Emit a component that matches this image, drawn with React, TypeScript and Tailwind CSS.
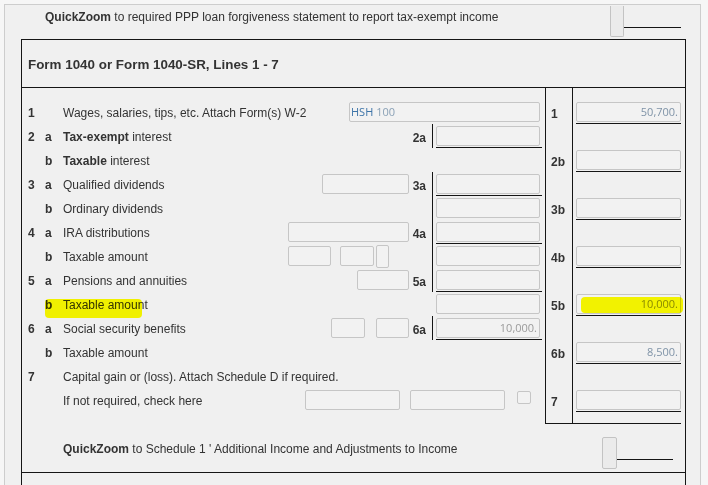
import React from "react";

const LINE = "border-[#151515]";

function Box({ className = "", children }: { className?: string; children?: React.ReactNode }) {
  return (
    <div className={"mt-[2px] h-[20px] border border-[#c6c6c6] rounded-[2px] bg-[#f2f2f2] shrink-0 " + className}>
      {children}
    </div>
  );
}

function Val({ children, color = "text-[#7f93a7]" }: { children: React.ReactNode; color?: string }) {
  return (
    <div className={"h-full flex items-center justify-end pr-[2px] text-[11px] font-['Open_Sans',sans-serif] " + color}>
      {children}
    </div>
  );
}

function Mid({ line, under, children }: { line?: boolean; under?: boolean; children?: React.ReactNode }) {
  return (
    <div className={"w-[113px] h-6 shrink-0 flex flex-col " + (line ? "border-l pl-[3px] " + LINE : "pl-[4px]")}>
      <Box className="w-[104px]">{children}</Box>
      {under ? <div className="mt-[1px] w-[106px] h-px bg-[#151515]" /> : null}
    </div>
  );
}

function LeftRow({
  num,
  letter,
  children,
  right,
}: {
  num?: string;
  letter?: string;
  children?: React.ReactNode;
  right?: React.ReactNode;
}) {
  return (
    <div className="flex h-6">
      <div className="w-[6px] shrink-0" />
      <span className="w-[17px] shrink-0 font-bold leading-[26px]">{num}</span>
      <span className="w-[18px] shrink-0 font-bold leading-[26px]">{letter}</span>
      <div className="flex-1 min-w-0 whitespace-nowrap leading-[26px]">{children}</div>
      <div className="w-[260px] shrink-0 flex">{right}</div>
    </div>
  );
}

function ARight({
  fields,
  label,
  mid,
}: {
  fields?: React.ReactNode;
  label?: string;
  mid?: React.ReactNode;
}) {
  return (
    <>
      <div className="flex w-[124px] shrink-0">{fields}</div>
      <div className="w-[17px] shrink-0 text-right font-bold leading-[28px]">{label}</div>
      <div className="w-[6px] shrink-0" />
      {mid}
    </>
  );
}

function RLabel({ children }: { children?: React.ReactNode }) {
  return <div className="h-6 pl-[5px] font-bold leading-[28px]">{children}</div>;
}

function RField({ children }: { children?: React.ReactNode }) {
  return (
    <div className="h-6 flex flex-col">
      <Box className="w-[105px]">{children}</Box>
      <div className="mt-[1px] w-[105px] h-px bg-[#151515]" />
    </div>
  );
}

function Empty() {
  return <div className="h-6" />;
}

export default function App() {
  return (
    <div className="relative w-[708px] h-[485px] overflow-hidden bg-[#f6f6f6] font-['Liberation_Sans',Arial,sans-serif] text-[12px] text-[#333333]">
      <div className="ml-[4px] mt-[4px] w-[697px] h-[481px] border-l border-t border-r border-[#cdcdcd] bg-[#f0f0f0] flex flex-col">
        {/* top QuickZoom row */}
        <div className="h-[34px] flex shrink-0">
          <div className="w-[605px] pl-[40px] pt-[5px] leading-[14px] whitespace-nowrap">
            <span className="font-bold">QuickZoom</span> to required PPP loan forgiveness statement to report tax-exempt income
          </div>
          <div className="mt-[1px] w-[14px] h-[31px] border border-t-0 border-[#c3c3c3] bg-[#ebebeb] rounded-b-[2px]" />
          <div className={"w-[57px] h-[23px] border-b " + LINE} />
        </div>

        {/* main box */}
        <div className={"ml-[16px] w-[665px] flex-1 border-x border-t flex flex-col " + LINE}>
          <div className={"h-[48px] shrink-0 border-b flex items-center pl-[6px] pt-[4px] text-[13.4px] font-bold " + LINE}>
            Form 1040 or Form 1040-SR, Lines 1 - 7
          </div>

          <div className="flex shrink-0">
            {/* left column */}
            <div className="w-[523px] shrink-0 pt-[12px]">
              <LeftRow
                num="1"
                right={
                  <div className="ml-[64px]">
                    <Box className="w-[191px]">
                      <div className="h-full flex items-center pl-[1px] text-[11px] font-['Open_Sans',sans-serif]">
                        <span className="text-[#3d74a8]">HSH</span>
                        <span className="ml-[3px] text-[#8aa1b6]">100</span>
                      </div>
                    </Box>
                  </div>
                }
              >
                Wages, salaries, tips, etc. Attach Form(s) W-2
              </LeftRow>
              <LeftRow num="2" letter="a" right={<ARight label="2a" mid={<Mid line under />} />}>
                <span className="font-bold">Tax-exempt</span> interest
              </LeftRow>
              <LeftRow letter="b">
                <span className="font-bold">Taxable</span> interest
              </LeftRow>
              <LeftRow
                num="3"
                letter="a"
                right={
                  <ARight
                    fields={
                      <div className="ml-[37px]">
                        <Box className="w-[87px]" />
                      </div>
                    }
                    label="3a"
                    mid={<Mid line under />}
                  />
                }
              >
                Qualified dividends
              </LeftRow>
              <LeftRow letter="b" right={<ARight mid={<Mid line />} />}>
                Ordinary dividends
              </LeftRow>
              <LeftRow
                num="4"
                letter="a"
                right={
                  <ARight
                    fields={
                      <div className="ml-[3px]">
                        <Box className="w-[121px]" />
                      </div>
                    }
                    label="4a"
                    mid={<Mid line under />}
                  />
                }
              >
                IRA distributions
              </LeftRow>
              <LeftRow
                letter="b"
                right={
                  <ARight
                    fields={
                      <>
                        <div className="ml-[3px]">
                          <Box className="w-[43px]" />
                        </div>
                        <div className="ml-[9px]">
                          <Box className="w-[34px]" />
                        </div>
                        <div className="ml-[2px] mt-[1px] w-[13px] h-[23px] border border-[#c6c6c6] rounded-[2px] bg-[#f2f2f2]" />
                      </>
                    }
                    mid={<Mid line />}
                  />
                }
              >
                Taxable amount
              </LeftRow>
              <LeftRow
                num="5"
                letter="a"
                right={
                  <ARight
                    fields={
                      <div className="ml-[72px]">
                        <Box className="w-[52px]" />
                      </div>
                    }
                    label="5a"
                    mid={<Mid line under />}
                  />
                }
              >
                Pensions and annuities
              </LeftRow>
              <LeftRow letter="b" right={<ARight mid={<Mid />} />}>
                Taxable amount
              </LeftRow>
              <LeftRow
                num="6"
                letter="a"
                right={
                  <ARight
                    fields={
                      <>
                        <div className="ml-[46px]">
                          <Box className="w-[34px]" />
                        </div>
                        <div className="ml-[11px]">
                          <Box className="w-[33px]" />
                        </div>
                      </>
                    }
                    label="6a"
                    mid={
                      <Mid line under>
                        <Val color="text-[#9b9b9b]">10,000.</Val>
                      </Mid>
                    }
                  />
                }
              >
                Social security benefits
              </LeftRow>
              <LeftRow letter="b">Taxable amount</LeftRow>
              <LeftRow num="7">Capital gain or (loss). Attach Schedule D if required.</LeftRow>
              <LeftRow
                right={
                  <>
                    <div className="ml-[20px]">
                      <Box className="w-[95px]" />
                    </div>
                    <div className="ml-[10px]">
                      <Box className="w-[95px]" />
                    </div>
                    <div className="ml-[12px] mt-[3px] w-[14px] h-[13px] border border-[#c6c6c6] rounded-[2px] bg-[#f2f2f2]" />
                  </>
                }
              >
                If not required, check here
              </LeftRow>
            </div>

            {/* right column box */}
            <div className={"w-[136px] shrink-0 border-l border-b flex " + LINE}>
              <div className={"w-[27px] shrink-0 border-r pt-[12px] pb-[11px] " + LINE}>
                <RLabel>1</RLabel>
                <RLabel />
                <RLabel>2b</RLabel>
                <RLabel />
                <RLabel>3b</RLabel>
                <RLabel />
                <RLabel>4b</RLabel>
                <RLabel />
                <RLabel>5b</RLabel>
                <RLabel />
                <RLabel>6b</RLabel>
                <RLabel />
                <RLabel>7</RLabel>
              </div>
              <div className="w-[108px] shrink-0 pl-[3px] pt-[12px] pb-[11px]">
                <RField>
                  <Val>50,700.</Val>
                </RField>
                <Empty />
                <RField />
                <Empty />
                <RField />
                <Empty />
                <RField />
                <Empty />
                <RField>
                  <Val color="text-[#8a8a6a]">10,000.</Val>
                </RField>
                <Empty />
                <RField>
                  <Val>8,500.</Val>
                </RField>
                <Empty />
                <RField />
              </div>
            </div>
            <div className="w-[4px] shrink-0" />
          </div>

          {/* bottom QuickZoom */}
          <div className={"h-[49px] shrink-0 border-b flex " + LINE}>
            <div className="w-[580px] shrink-0 pl-[41px] pt-[18px] leading-[14px] whitespace-nowrap">
              <span className="font-bold">QuickZoom</span> to Schedule 1 &#39; Additional Income and Adjustments to Income
            </div>
            <div className="mt-[13px] w-[15px] h-[32px] border border-[#c3c3c3] bg-[#ebebeb] rounded-[2px]" />
            <div className={"w-[56px] h-[36px] border-b " + LINE} />
          </div>
        </div>
      </div>

      {/* highlighter marks */}
      <div className="absolute left-[45px] top-[299px] w-[97px] h-[19px] rounded-[4px] bg-[#ffff00] mix-blend-multiply" />
      <div className="absolute left-[581px] top-[297px] w-[102px] h-[16px] rounded-[4px] bg-[#ffff00] mix-blend-multiply" />
    </div>
  );
}
